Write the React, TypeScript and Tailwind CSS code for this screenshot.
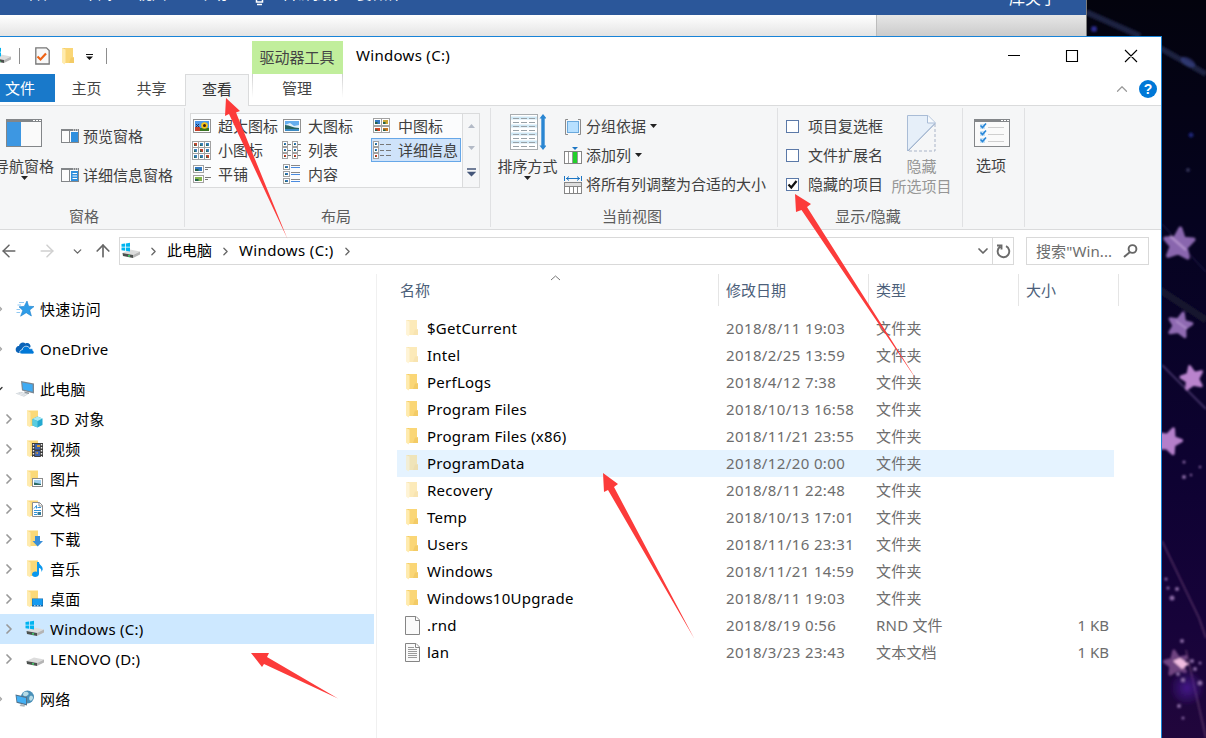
import React from 'react';
import { ArrowLeft, ArrowRight, ArrowUp, ChevronDown, ChevronRight, ChevronUp } from 'lucide-react';

type FileKind = 'folder' | 'hidden' | 'blank' | 'text';

interface FileRow {
    name: string;
    date: string;
    type: string;
    kind: FileKind;
    size?: string;
    hover?: boolean;
}

const FILES: FileRow[] = [
    { name: '$GetCurrent', date: '2018/8/11 19:03', type: '文件夹', kind: 'hidden' },
    { name: 'Intel', date: '2018/2/25 13:59', type: '文件夹', kind: 'hidden' },
    { name: 'PerfLogs', date: '2018/4/12 7:38', type: '文件夹', kind: 'folder' },
    { name: 'Program Files', date: '2018/10/13 16:58', type: '文件夹', kind: 'folder' },
    { name: 'Program Files (x86)', date: '2018/11/21 23:55', type: '文件夹', kind: 'folder' },
    { name: 'ProgramData', date: '2018/12/20 0:00', type: '文件夹', kind: 'hidden', hover: true },
    { name: 'Recovery', date: '2018/8/11 22:48', type: '文件夹', kind: 'hidden' },
    { name: 'Temp', date: '2018/10/13 17:01', type: '文件夹', kind: 'folder' },
    { name: 'Users', date: '2018/11/16 23:31', type: '文件夹', kind: 'folder' },
    { name: 'Windows', date: '2018/11/21 14:59', type: '文件夹', kind: 'folder' },
    { name: 'Windows10Upgrade', date: '2018/8/11 19:03', type: '文件夹', kind: 'folder' },
    { name: '.rnd', date: '2018/8/19 0:56', type: 'RND 文件', kind: 'blank', size: '1 KB' },
    { name: 'lan', date: '2018/3/23 23:43', type: '文本文档', kind: 'text', size: '1 KB' },
];

/* ---------- icons ---------- */

const FolderIcon = ({ faded = false }: { faded?: boolean }) => (
    <svg width="14" height="18" viewBox="0 0 14 18" className={faded ? 'opacity-50' : ''}>
        <path d="M1 1H12V10.500H13V16H4L1 15Z" fill="#f5cf6a" />
        <path d="M4 1H12V10.500H13V16H4Z" fill="#fad676" />
        <path d="M10 10.500H13V16H8Z" fill="#f3cb66" />
        <path d="M1 1L4.500 2.500V15.500L3.500 17.500L1 15.500Z" fill="#ffebae" />
    </svg>
);

const PageIcon = ({ lines = false }: { lines?: boolean }) => (
    <svg width="15" height="19" viewBox="0 0 15 19">
        <path d="M.5 .5H11L14.500 4V18.500H.5Z" fill="#fafafa" stroke="#858585" />
        <path d="M10.500 .5V4.500H14" fill="#fff" stroke="#858585" />
        {lines && <path d="M3 4.500H9M3 6.500H12M3 8.500H12M3 10.500H12M3 12.500H12M3 14.500H12" stroke="#9a9a9a" />}
    </svg>
);

const DriveIcon = ({ windows = false }: { windows?: boolean }) => (
    <svg width="20" height="18" viewBox="0 0 20 18">
        <path d="M1.500 11L9 7.500L19 9.500L12 13Z" fill="#dcdcdc" />
        <path d="M1.500 11L12 13V16L2 14Z" fill="#4c504e" />
        <path d="M12 13L19 9.500V12.500L12 16Z" fill="#b5b5b5" />
        <path d="M7 13.700L9 14.100" stroke="#3fd46a" strokeWidth="1.500" />
        {windows && <path d="M0.500 2L4 1.500V4.700H.5ZM4.800 1.400L9 .8V4.700H4.800ZM.5 5.500H4V8.700L.5 8.200ZM4.800 5.500H9V9.400L4.800 8.800Z" fill="#00b4f0" />}
    </svg>
);

const StarIcon = () => (
    <svg width="20" height="18" viewBox="0 0 20 18">
        <path d="M12 1L13.6 6.2L19 6.6L14.7 10L16.4 16L11.2 12.7L5.6 16.2L7.8 10.4L4 6.8L9.2 6.4Z" fill="#2f9de8" stroke="#1b7fcc" strokeWidth="0.6" />
        <path d="M4 2.5H9M2.5 5H6M1.5 9.5H5M1.5 12.5H5" stroke="#8fc8f2" strokeWidth="1" />
    </svg>
);

const CloudIcon = () => (
    <svg width="20" height="18" viewBox="0 0 20 18">
        <path d="M1 11C0 8 2 6 4 6C4.5 3 8 1.5 10.5 3.5C13 2 16 4 15.5 7L13 9L8 8L5 13C3 13 1.5 12.5 1 11Z" fill="#0a63b8" />
        <path d="M7 14C4 14 4 10 7.2 9.7C7.8 5.5 13.5 5 14.8 8.7C17.5 8.3 18.3 9.5 17.8 10.5C20 11.5 19 14 17.5 14Z" fill="#0078d7" stroke="#fff" strokeWidth="0.7" />
    </svg>
);

const ComputerIcon = () => (
    <svg width="20" height="18" viewBox="0 0 20 18">
        <path d="M6 1L19 3.5V13.5L7 10.5Z" fill="#7c8791" />
        <path d="M7.2 2.4L17.6 4.4V11.8L8 9.5Z" fill="#3fabf3" />
        <path d="M9 11.5L14 12.6V14L10 13.5Z" fill="#8e979e" />
        <path d="M.5 13.5L6 11.8L13 14.2L9 16.8Z" fill="#cdd3d8" />
        <path d="M2.5 13.6L9.5 15.6M5 12.8L11.5 14.8" stroke="#f5f7f8" strokeWidth=".7" />
    </svg>
);

const NetworkIcon = () => (
    <svg width="20" height="18" viewBox="0 0 20 18">
        <circle cx="12.5" cy="7" r="6.5" fill="#4a90b8" />
        <path d="M9 2C12 1 15 3 13 5S8 7 8 4ZM15 6C18 5 19 8 17 10S13 9 15 6Z" fill="#b7dbe6" />
        <path d="M.5 4.5L12 7V15.5L1.5 12.8Z" fill="#53718a" />
        <path d="M1.4 5.7L11 7.9V14L2.3 11.8Z" fill="#43b0f5" />
        <path d="M6 14L10 15.2L9.5 16.8L4.5 16Z" fill="#aab3b9" />
    </svg>
);

type Badge = '3d' | 'video' | 'picture' | 'document' | 'download' | 'music' | 'desktop';

const LibraryIcon = ({ badge }: { badge: Badge }) => (
    <svg width="18" height="18" viewBox="0 0 18 18">
        <path d="M1 .5H12V16H4L1 15Z" fill="#fbd978" />
        <path d="M1 .5L4.5 2.5V17.5L1 15.5Z" fill="#ffebae" />
        {badge === '3d' && (
            <>
                <path d="M6.5 9L11.5 6.5L16.5 8.5V15L11.5 17.5L6.5 15.5Z" fill="#24a9d0" />
                <path d="M6.5 9L11.5 6.5L16.5 8.5L11.5 11Z" fill="#a9eaf5" />
                <path d="M6.5 9L11.5 11V17.5L6.5 15.5Z" fill="#5accdf" />
            </>
        )}
        {badge === 'video' && (
            <>
                <rect x="6" y="3" width="11" height="14" fill="#3c3c3c" />
                <rect x="9" y="4" width="5" height="5.5" fill="#3d63ae" />
                <rect x="9" y="11" width="5" height="5" fill="#3d63ae" />
                <path d="M11 5H14V7H11ZM9 13L12 12V14Z" fill="#dc9d2c" />
                <path d="M7.5 4V17M15.5 4V17" stroke="#eee" strokeWidth="1.4" strokeDasharray="1.5 1.5" />
            </>
        )}
        {badge === 'picture' && (
            <>
                <rect x="6.5" y="8.5" width="10" height="8" fill="#fff" stroke="#8c8c8c" />
                <rect x="8" y="10" width="7" height="5" fill="#9fd0ef" />
                <path d="M8 15V12.5L15 14V15Z" fill="#2c6a64" />
            </>
        )}
        {badge === 'document' && (
            <>
                <path d="M6.5 2.5H13.5L16.5 5.5V16.5H6.5Z" fill="#fff" stroke="#8c8c8c" />
                <path d="M8 8.5L10.5 5.5V8.5M11.5 7.5H15M8 10.5H15M8 12.5H11M8 14.5H11" stroke="#3294d8" fill="none" />
                <path d="M13 2.500V6H16.500" stroke="#8c8c8c" fill="none" />
                <rect x="11.5" y="12" width="3.5" height="3" fill="#367e9b" />
            </>
        )}
        {badge === 'download' && <path d="M9 6H14V11H17L11.7 16.5L6.5 11H9Z" fill="#3a8fd8" />}
        {badge === 'music' && (
            <path d="M11 2H13C13 5 17 5.5 16.7 9.5L15.5 12C15.5 9 14.5 8 13 8V14C13 17.5 6 18 6 14.5C6 12 9 11 11 12Z" fill="#0a98ee" />
        )}
        {badge === 'desktop' && (
            <>
                <rect x="6" y="8.500" width="11" height="8" fill="#1668a8" />
                <rect x="6.500" y="9" width="10" height="6" fill="#159bf0" />
                <path d="M8 15.700H15" stroke="#fff" strokeWidth=".8" strokeDasharray="1.500 1.500" />
            </>
        )}
    </svg>
);

const PaneIcon = ({ lines = false }: { lines?: boolean }) => (
    <svg width="18" height="14" viewBox="0 0 18 14" className="shrink-0">
        <rect x="0.5" y="0.5" width="17" height="13" fill="#fcfcfc" stroke="#838689" />
        <rect width="18" height="2" fill="#838689" />
        <path d="M12 1H17" stroke="#fff" strokeDasharray="1 1" />
        <path d="M8.500 2V13" stroke="#838689" />
        <rect x="10" y="3" width="7" height="10" fill="#2f8fdd" />
        {lines && <path d="M11.500 5.500H16M11.500 8H16M11.500 10.500H16" stroke="#fff" />}
    </svg>
);

const NavPaneIcon = () => (
    <svg width="36" height="28" viewBox="0 0 36 28">
        <rect x="0.5" y="0.5" width="35" height="27" fill="#fafafa" stroke="#838689" />
        <rect width="36" height="3" fill="#838689" />
        <path d="M27 1.500H35" stroke="#fff" strokeDasharray="2 1" />
        <rect x="1" y="3" width="14" height="24" fill="#3d97e2" />
    </svg>
);

const Photo = ({ x, y, w = 4, h = 3, fill = '#3478c0' }: { x: number; y: number; w?: number; h?: number; fill?: string }) => (
    <>
        <rect x={x - 1.5} y={y - 1.5} width={w + 3} height={h + 3} fill="#fff" stroke="#a2a2a2" />
        <rect x={x} y={y} width={w} height={h} fill={fill} />
        <rect x={x} y={y + h / 2} width={w / 2} height={h / 2} fill="#24624b" />
    </>
);

const ViewIcon = ({ view }: { view: string }) => (
    <svg width="19" height="20" viewBox="0 0 19 20" className="shrink-0">
        {view === 'xl' && (
            <>
                <rect x="1.500" y="3.500" width="17" height="13" fill="#fff" stroke="#929292" />
                <rect x="3" y="5" width="14" height="10" fill="#4d98ea" />
                <path d="M3 11H8V15H3Z" fill="#c3402a" />
                <path d="M8 12H17V15H8Z" fill="#397523" />
                <circle cx="12.5" cy="9.500" r="3.300" fill="#f5c51a" />
                <circle cx="12.5" cy="9.500" r="1.500" fill="#3c1d10" />
                <path d="M4 8L7 11M7 8L4 11" stroke="#263054" />
            </>
        )}
        {view === 'lg' && (
            <>
                <rect x="1.500" y="3.500" width="17" height="13" fill="#fff" stroke="#929292" />
                <rect x="3" y="5" width="14" height="10" fill="#65aeee" />
                <path d="M3 9L8 7L12 10L17 9V12H3Z" fill="#e1f1fb" />
                <path d="M3 9C8 9 10 12 17 12V13H3Z" fill="#25635f" />
                <path d="M3 13H17V15H3Z" fill="#3c8bc4" />
            </>
        )}
        {view === 'md' && (
            <>
                <Photo x={3} y={4} w={5} h={4} />
                <Photo x={11} y={4} w={5} h={4} fill="#c8a437" />
                <Photo x={3} y={12} w={5} h={3} fill="#d64524" />
                <Photo x={11} y={12} w={5} h={3} fill="#c77720" />
            </>
        )}
        {view === 'sm' && [0, 1, 2].map(r => [0, 1, 2].map(c => (
            <Photo key={`${r}${c}`} x={2 + c * 6} y={3 + r * 6} w={3} h={3} fill={c === r ? '#c7452e' : '#3f83bd'} />
        )))}
        {view === 'list' && (
            <>
                {[0, 1, 2].map(r => <Photo key={r} x={2} y={3 + r * 6} w={2} h={2} fill={r === 2 ? '#d03a22' : '#3478c0'} />)}
                {[0, 1, 2].map(r => <Photo key={r} x={12} y={3 + r * 6} w={2} h={2} fill={r === 2 ? '#d03a22' : '#3478c0'} />)}
                <path d="M6 4.500H9M6 10.500H9M6 15.500H9M16 4.500H19M16 10.500H19M16 15.500H19" stroke="#777" />
            </>
        )}
        {view === 'details' && (
            <>
                {[0, 1, 2].map(r => <Photo key={r} x={3} y={3 + r * 6} w={2} h={2} fill={r === 2 ? '#d03a22' : '#3478c0'} />)}
                <path d="M8 4.500H12M14 4.500H19M8 10.500H12M14 10.500H19M8 15.500H12M14 15.500H19" stroke="#777" />
            </>
        )}
        {view === 'tiles' && (
            <>
                <Photo x={3} y={3} w={7} h={4} />
                <Photo x={3} y={13} w={7} h={4} fill="#83b34b" />
                <path d="M13 3.500H19M13 5.500H16M13 13.500H19M13 15.500H16" stroke="#777" />
            </>
        )}
        {view === 'content' && (
            <>
                {[0, 1, 2].map(r => <Photo key={r} x={3} y={2 + r * 7} w={3} h={2} />)}
                <path d="M9 3.500H18M9 10.500H18M9 17.500H18" stroke="#4a8be0" />
                <path d="M9 1.500H18M9 8.500H18M9 15.500H18" stroke="#888" />
            </>
        )}
    </svg>
);

const SortIcon = () => (
    <svg width="36" height="36" viewBox="0 0 36 36">
        <rect x="0.5" y="0.5" width="27" height="35" fill="#fff" stroke="#a9adb0" />
        <path d="M1 4H27M1 12H27M1 20H27M1 28H27" stroke="#cfe8f5" strokeWidth="3" />
        <path d="M3 4.500H26M3 8.500H26M3 12.500H26M3 16.500H26M3 20.500H26M3 24.500H26M3 28.500H26M3 32.500H26" stroke="#98a1a7" strokeDasharray="6 2" />
        <path d="M33 0L36.500 4.500H34.700V31.500H36.500L33 36L29.500 31.500H31.300V4.500H29.500Z" fill="#2a86d2" />
    </svg>
);

const GroupIcon = () => (
    <svg width="18" height="18" viewBox="0 0 18 18">
        <path d="M4 1.500H1.500V16.500H4M14 1.500H16.500V16.500H14" stroke="#8b8b8b" fill="none" />
        <rect x="3.500" y="3.500" width="11" height="11" fill="#b7e0ff" stroke="#6aa9dc" />
    </svg>
);

const AddColumnIcon = () => (
    <svg width="18" height="18" viewBox="0 0 18 18">
        <path d="M8 0H14L11 3Z" fill="#1c76c4" />
        <rect x=".5" y="4.500" width="17" height="12" fill="#fff" stroke="#858585" />
        <path d="M4.500 5V16M8.500 5V16M13.500 5V16" stroke="#9a9a9a" />
        <rect x="9" y="5" width="4" height="11" fill="#22cf2a" />
    </svg>
);

const FitColumnsIcon = () => (
    <svg width="18" height="18" viewBox="0 0 18 18">
        <path d="M.5 0V5M17.500 0V5M2 2.500H16M5 .5L2.500 2.500L5 4.500M13 .5L15.500 2.500L13 4.500" stroke="#1c76c4" fill="none" />
        <rect x=".5" y="6.500" width="17" height="11" fill="#fff" stroke="#858585" />
        <path d="M1 7H17V10H1Z" fill="#dedede" />
        <path d="M0 10.500H18M5.500 11V17M9.500 11V17M13.500 11V17" stroke="#858585" />
    </svg>
);

const HideIcon = () => (
    <svg width="29" height="37" viewBox="0 0 29 37">
        <path d="M.5 .5H21L28.500 8L.5 36Z" fill="#e6eff9" stroke="#a9bcd6" />
        <path d="M20.500 .5V8H28" fill="#f7fafd" stroke="#a9bcd6" />
        <path d="M28 9V36H1" fill="none" stroke="#a9b4c8" strokeDasharray="3 2" />
        <path d="M1 36L28 8.500" stroke="#9fb2cd" />
    </svg>
);

const OptionsIcon = () => (
    <svg width="36" height="28" viewBox="0 0 36 28">
        <rect x="0.5" y="0.5" width="35" height="27" fill="#fafafa" stroke="#838689" />
        <rect width="36" height="3" fill="#838689" />
        <path d="M27 1.500H35" stroke="#fff" strokeDasharray="2 1" />
        <path d="M6 5H11V10H6ZM6 12H11V17H6ZM6 19H11V24H6Z" fill="#c7e1f5" />
        <path d="M6.500 6.500L8.500 8.500L12 4.500M6.500 13.500L8.500 15.500L12 11.500M6.500 20.500L8.500 22.500L12 18.500" stroke="#2786d8" strokeWidth="1.600" fill="none" />
        <path d="M14 8.500H30M14 15.500H30M14 22.500H30" stroke="#cfcfcf" />
    </svg>
);

const Caret = ({ className = '' }: { className?: string }) => (
    <svg width="7" height="4" viewBox="0 0 7 4" className={className}>
        <path d="M0 0H7L3.500 4Z" fill="currentColor" />
    </svg>
);

/* ---------- background ---------- */

const WallpaperStar = ({ x, y, s, r, fill }: { x: number; y: number; s: number; r: number; fill: string }) => (
    <path
        transform={`translate(${x} ${y}) rotate(${r}) scale(${s})`}
        d="M0 -11L3 -4L10 -4L5 2L7 9L0 6L-7 9L-5 2L-10 -3L-3 -4Z"
        fill={fill}
        stroke={fill}
        strokeWidth="3"
        strokeLinejoin="round"
    />
);

const Wallpaper = () => (
    <svg className="absolute inset-0" width="1206" height="738" viewBox="0 0 1206 738">
        <defs>
            <linearGradient id="sky" x1="0" y1="0" x2="0" y2="1">
                <stop offset="0" stopColor="#03030d" />
                <stop offset="0.3" stopColor="#05031f" />
                <stop offset="0.65" stopColor="#0e0232" />
                <stop offset="0.85" stopColor="#17033a" />
                <stop offset="1" stopColor="#21063c" />
            </linearGradient>
            <radialGradient id="glow">
                <stop offset="0" stopColor="#5320a8" />
                <stop offset="1" stopColor="#5320a8" stopOpacity="0" />
            </radialGradient>
            <filter id="soft" x="-20%" y="-20%" width="140%" height="140%">
                <feGaussianBlur stdDeviation="0.900" />
            </filter>
        </defs>
        <rect width="1206" height="738" fill="url(#sky)" />
        <g filter="url(#soft)">
            <path d="M1086 12L1140 36M1160 48L1206 74" stroke="#1f2340" strokeWidth="6" />
            <path d="M1160 290L1206 320" stroke="#15152f" strokeWidth="7" />
            <path d="M1162 224L1206 272" stroke="#2a2354" strokeWidth="1" />
            <path d="M1162 365L1206 409" stroke="#554078" strokeWidth="1.500" />
            <path d="M1162 541L1199 618L1206 638M1186 650L1206 738" stroke="#553164" strokeWidth="1.500" fill="none" />
            <circle cx="1094" cy="29" r="3" fill="#2a2a88" />
            <ellipse cx="1188" cy="62" rx="8" ry="4" transform="rotate(28 1188 62)" fill="#3b4590" opacity=".6" />
            <circle cx="1191" cy="135" r="2.500" fill="#1c2473" />
            <circle cx="1188" cy="170" r="2" fill="#353556" />
            <WallpaperStar x={1179} y={244} s={1.4} r={5} fill="#8966ae" />
            <path d="M1170 236L1186 250" stroke="#b795d0" strokeWidth="2" />
            <WallpaperStar x={1180} y={325} s={1.1} r={15} fill="#8f6bb2" />
            <path d="M1176 321L1187 329" stroke="#b795d0" strokeWidth="1.500" />
            <WallpaperStar x={1192} y={378} s={1.05} r={-12} fill="#b983cd" />
            <WallpaperStar x={1169} y={441} s={1.15} r={20} fill="#b47fca" />
            <WallpaperStar x={1176} y={663} s={1.1} r={-10} fill="#704481" />
            <circle cx="1187" cy="688" r="18" fill="url(#glow)" opacity=".7" />
            <path d="M1173 661L1180 658L1189 664L1182 669Z" fill="#f0bce0" />
            <g fill="#8b6aa5">
                <circle cx="1184" cy="462" r="1.500" />
                <circle cx="1184" cy="477" r="2" />
                <circle cx="1200" cy="467" r="1.200" />
                <circle cx="1191" cy="475" r="1.200" />
                <circle cx="1166" cy="579" r="1.500" />
                <circle cx="1168" cy="588" r="1.500" />
                <circle cx="1177" cy="589" r="2" />
                <circle cx="1172" cy="598" r="2.500" />
                <circle cx="1182" cy="641" r="2" />
                <circle cx="1192" cy="661" r="2" />
                <circle cx="1195" cy="669" r="2" />
                <circle cx="1200" cy="663" r="1.500" />
                <circle cx="1178" cy="674" r="2" />
                <circle cx="1183" cy="680" r="2.200" />
                <circle cx="1200" cy="683" r="2.500" />
                <circle cx="1179" cy="706" r="2" />
                <circle cx="1183" cy="718" r="1.500" />
            </g>
        </g>
    </svg>
);

const WordWindow = () => (
    <div className="absolute left-0 top-0 flex h-9 w-[1087px] flex-col border-r border-[#7a7a7a]">
        <div className="flex h-[15px] items-start bg-[#2b579a] pl-[21px] text-[15px] text-white">
            <div className="flex -mt-[17px] h-5 w-full items-center leading-5 tracking-[-0.5px]">
                <span className="w-[62px]">邮件</span>
                <span className="w-[54px]">审阅</span>
                <span className="w-[61px]">视图</span>
                <span className="w-[57px]">帮助</span>
                <svg width="9" height="20" viewBox="0 0 9 20" className="mr-[18px] translate-y-[3px]">
                    <path d="M1.500 10V16H7.500V10M2 18.500H7" stroke="#fff" strokeWidth="1.500" fill="none" />
                </svg>
                <span className="w-[727px] tracking-normal">告诉我你想要做什么</span>
                <span className="translate-y-[5px] text-base tracking-normal">库关于</span>
            </div>
        </div>
        <div className="flex flex-1">
            <div className="w-[876px] bg-linear-to-b from-white to-[#e4e4e4]" />
            <div className="flex-1 border-l border-[#bcbcbc] bg-linear-to-b from-[#e6e6e6] to-[#cbcbcb]" />
        </div>
    </div>
);

/* ---------- explorer ---------- */

const TitleBar = () => (
    <div className="flex h-[69px] shrink-0 border-b border-[#dadbdc]">
        <div className="flex w-[252px] flex-col">
            <div className="flex h-[37px] items-center">
                <div className="-ml-2 w-5"><DriveIcon windows /></div>
                <div className="ml-[7px] h-4 w-px bg-[#8d8d8d]" />
                <svg width="15" height="18" viewBox="0 0 15 18" className="ml-[15px]">
                    <path d="M.8 .8H11.500L14.200 3.500V17H.8Z" fill="#f8f8f8" stroke="#777" strokeWidth="1.300" />
                    <path d="M2.500 9.500L5.500 12.500L11 6.500" stroke="#ee6214" strokeWidth="2.200" fill="none" />
                </svg>
                <div className="ml-[11px]"><FolderIcon /></div>
                <svg width="7" height="6" viewBox="0 0 7 6" className="ml-[11px] mt-[2px]">
                    <path d="M0 .5H7" stroke="#111" />
                    <path d="M0 2.500H7L3.500 6Z" fill="#111" />
                </svg>
                <div className="ml-[13px] h-4 w-px bg-[#8d8d8d]" />
            </div>
            <div className="flex flex-1 text-[15px] text-[#444]">
                <div className="flex h-7 w-[55px] items-center bg-[#1979ca] pl-[5px] text-white">文件</div>
                <div className="flex h-[29px] w-[63px] items-center justify-center">主页</div>
                <div className="flex h-[29px] w-[67px] items-center justify-center">共享</div>
                <div className="relative z-10 -mb-px flex w-16 items-center justify-center border border-b-0 border-[#dadbdc] bg-[#f5f6f7] pb-[3px] text-[#333]">查看</div>
            </div>
        </div>
        <div className="flex w-[91px] flex-col pt-1 text-[15px] text-[#444]">
            <div className="flex h-[33px] items-center justify-center whitespace-nowrap bg-[#c1ee9c] pr-px">驱动器工具</div>
            <div className="flex h-6 justify-between">
                <div className="w-px bg-linear-to-b from-[#cfcfcf] to-white" />
                <span className="pr-px pt-[3px]">管理</span>
                <div className="w-px bg-linear-to-b from-[#cfcfcf] to-white" />
            </div>
        </div>
        <div className="flex-1 pl-[13px] pt-[6px] text-[15px] leading-6 tracking-[0.3px] text-black">Windows (C:)</div>
        <div className="flex w-[174px] flex-col">
            <div className="flex h-[37px] items-center text-black">
                <svg width="130" height="14" viewBox="0 0 130 14" className="ml-[21px]">
                    <path d="M0 6.500H12M58.500 1.500H69.500V12.500H58.500ZM117 1L129 13M129 1L117 13" stroke="#000" fill="none" strokeWidth="1.100" />
                </svg>
            </div>
            <div className="flex items-center justify-end pr-1 pt-[6px]">
                <ChevronUp className="mr-[8px] size-[18px] text-[#9b9b9b]" strokeWidth={1.6} />
                <span className="flex size-[18px] items-center justify-center rounded-full bg-[#0078d7] font-['Liberation_Sans'] text-[14px] font-bold leading-none text-white">?</span>
            </div>
        </div>
    </div>
);

const Group = ({ label, className, children }: { label: string; className: string; children: React.ReactNode }) => (
    <div className={`my-0.5 flex shrink-0 flex-col whitespace-nowrap border-r border-[#e0e1e3] ${className}`}>
        <div className="flex h-[98px]">{children}</div>
        <div className="text-center leading-5 text-[#5c5c5c]">{label}</div>
    </div>
);

const GALLERY = [
    [['xl', '超大图标'], ['lg', '大图标'], ['md', '中图标']],
    [['sm', '小图标'], ['list', '列表'], ['details', '详细信息']],
    [['tiles', '平铺'], ['content', '内容']],
];

const CheckRow = ({ label, checked = false }: { label: string; checked?: boolean }) => (
    <div className="flex h-[29px] items-center">
        <div className="flex size-[13px] shrink-0 items-center justify-center border border-[#5b79a8] bg-white">
            {checked && (
                <svg width="11" height="11" viewBox="0 0 11 11">
                    <path d="M1.500 5.500L4.300 8.500L9.500 2" stroke="#111" strokeWidth="2.200" fill="none" />
                </svg>
            )}
        </div>
        <span className="-mt-0.5 ml-[9px]">{label}</span>
    </div>
);

const CommandRow = ({ icon, label, menu = false }: { icon: React.ReactNode; label: string; menu?: boolean }) => (
    <div className="flex h-[29px] items-center gap-1">
        {icon}
        <span className="-mt-0.5">{label}</span>
        {menu && <Caret className="-mt-0.5 text-[#222]" />}
    </div>
);

const Ribbon = () => (
    <div className="flex h-[124px] shrink-0 border-b border-[#dadbdc] bg-[#f5f6f7] text-[15px] leading-5 text-[#3f3f3f]">
        <Group label="窗格" className="w-[185px] pr-4">
            <div className="-ml-[6px] flex w-[60px] shrink-0 flex-col items-center pt-[11px]">
                <NavPaneIcon />
                <span className="mt-[9px]">导航窗格</span>
                <Caret className="text-[#222]" />
            </div>
            <div className="flex flex-col pl-[7px] pt-[8px]">
                <div className="flex h-[39px] items-center gap-1"><PaneIcon />预览窗格</div>
                <div className="flex h-[39px] items-center gap-1"><PaneIcon lines />详细信息窗格</div>
            </div>
        </Group>
        <Group label="布局" className="w-[306px] pl-[5px] pr-2">
            <div className="mt-[5px] flex h-[75px] w-[272px] flex-col border border-r-0 border-[#dadbdc] bg-[#fbfcfd]">
                {GALLERY.map((row, i) => (
                    <div key={i} className="flex h-[24px]">
                        {row.map(([view, label]) => (
                            <div
                                key={view}
                                className={`flex h-[24px] w-[90px] items-center gap-[7px] ${view === 'details' ? 'border border-[#66a7e8] bg-[#cfe3fa]' : 'border border-transparent'}`}
                            >
                                <ViewIcon view={view} />
                                <span>{label}</span>
                            </div>
                        ))}
                    </div>
                ))}
            </div>
            <div className="mt-[5px] flex h-[75px] w-[18px] flex-col items-center justify-between border border-[#dadbdc] py-[10px] text-[#b3bac6]">
                <Caret className="rotate-180" />
                <Caret />
                <svg width="9" height="9" viewBox="0 0 9 9">
                    <path d="M0 1H9M1.500 4.500H7.500L4.500 7.500Z" fill="#45577a" stroke="#45577a" strokeWidth="1.500" />
                </svg>
            </div>
        </Group>
        <Group label="当前视图" className="w-[287px] pr-[4px]">
            <div className="flex w-[73px] shrink-0 flex-col items-center pt-[6px]">
                <SortIcon />
                <span className="mt-[6px]">排序方式</span>
                <Caret className="text-[#222]" />
            </div>
            <div className="flex flex-col pt-[4px]">
                <CommandRow icon={<GroupIcon />} label="分组依据" menu />
                <CommandRow icon={<AddColumnIcon />} label="添加列" menu />
                <CommandRow icon={<FitColumnsIcon />} label="将所有列调整为合适的大小" />
            </div>
        </Group>
        <Group label="显示/隐藏" className="w-[185px] pr-[4px]">
            <div className="flex w-[105px] shrink-0 flex-col pl-2 pt-[4px]">
                <CheckRow label="项目复选框" />
                <CheckRow label="文件扩展名" />
                <CheckRow label="隐藏的项目" checked />
            </div>
            <div className="flex flex-1 flex-col items-center pl-[2px] pt-[7px] text-center text-[#969696]">
                <HideIcon />
                <span className="mt-[4px]">隐藏</span>
                <span>所选项目</span>
            </div>
        </Group>
        <Group label="" className="w-[62px]">
            <div className="flex w-[58px] flex-col items-center pt-[11px]">
                <OptionsIcon />
                <span className="mt-[8px] pr-0.5">选项</span>
            </div>
        </Group>
    </div>
);

const AddressBar = () => (
    <div className="flex h-[42px] shrink-0 items-center text-[15px]">
        <ArrowLeft className="size-5 -ml-px text-[#666]" strokeWidth={1.8} />
        <ArrowRight className="ml-[18px] size-5 text-[#d0d0d0]" strokeWidth={1.8} />
        <ChevronDown className="ml-[14px] size-[13px] text-[#666]" strokeWidth={2.4} />
        <ArrowUp className="ml-[9px] size-5 text-[#666]" strokeWidth={2} />
        <div className="ml-[6px] flex h-7 w-[895px] items-center border border-[#d9d9d9] text-black">
            <div className="ml-px"><DriveIcon windows /></div>
            <ChevronRight className="ml-[6px] size-[13px] text-[#666]" strokeWidth={2.4} />
            <span className="-mt-0.5 ml-[7px]">此电脑</span>
            <ChevronRight className="ml-[7px] size-[13px] text-[#666]" strokeWidth={2.4} />
            <span className="-mt-0.5 ml-[7px] w-[97px] whitespace-nowrap tracking-[0.35px]">Windows (C:)</span>
            <ChevronRight className="ml-[5px] size-[13px] text-[#666]" strokeWidth={2.4} />
            <ChevronDown className="ml-auto mr-px size-4 text-[#666]" strokeWidth={2.6} />
            <div className="flex h-full w-[21px] items-center justify-center border-l border-[#d9d9d9]">
                <svg width="15" height="16" viewBox="0 0 15 16">
                    <path d="M10 3.200A5.800 5.800 0 1 1 4.200 3.600M1 2.500H5.500V6.500" stroke="#6b6b6b" strokeWidth="1.900" fill="none" />
                </svg>
            </div>
        </div>
        <div className="ml-3 flex h-7 w-[123px] items-center justify-between whitespace-nowrap border border-[#d9d9d9] pl-[9px] pr-[10px] text-[#6d6d6d]">
            <span className="tracking-[0.1px]">搜索"Win...</span>
            <svg width="15" height="14" viewBox="0 0 15 14">
                <circle cx="9.500" cy="5" r="3.900" stroke="#666" strokeWidth="1.900" fill="none" />
                <path d="M7 8L1 13" stroke="#666" strokeWidth="2" />
            </svg>
        </div>
    </div>
);

interface NavItemProps {
    icon: React.ReactNode;
    label: string;
    child?: boolean;
    open?: boolean;
    selected?: boolean;
}

const NavItem = ({ icon, label, child, open, selected }: NavItemProps) => (
    <div className={`flex h-[30px] w-[374px] shrink-0 items-center ${selected ? 'bg-[#cde8ff]' : ''}`}>
        {child ? (
            <ChevronRight className="ml-[1px] size-4 shrink-0 text-[#999]" strokeWidth={2.6} />
        ) : open ? (
            <ChevronDown className="-ml-[7px] size-3 shrink-0 text-[#333]" strokeWidth={2.6} />
        ) : (
            <ChevronRight className="-ml-[6px] mr-[-1px] size-3 shrink-0 text-[#a6a6a6]" strokeWidth={2.6} />
        )}
        <div className={`flex w-5 shrink-0 justify-center ${child ? 'ml-[8px]' : 'ml-[10px]'}`}>{icon}</div>
        <span className={`tracking-[0.25px] ${child ? 'ml-[5px]' : 'ml-[5px]'}`}>{label}</span>
    </div>
);

const LIBRARIES: [Badge, string][] = [
    ['3d', '3D 对象'],
    ['video', '视频'],
    ['picture', '图片'],
    ['document', '文档'],
    ['download', '下载'],
    ['music', '音乐'],
    ['desktop', '桌面'],
];

const Sidebar = () => (
    <div className="flex w-[377px] shrink-0 flex-col border-r border-[#f0f0f0] pt-5 text-[15px] text-black">
        <NavItem icon={<StarIcon />} label="快速访问" />
        <div className="h-[10px] shrink-0" />
        <NavItem icon={<CloudIcon />} label="OneDrive" />
        <div className="h-[10px] shrink-0" />
        <NavItem icon={<ComputerIcon />} label="此电脑" open />
        {LIBRARIES.map(([badge, label]) => (
            <NavItem key={badge} icon={<LibraryIcon badge={badge} />} label={label} child />
        ))}
        <NavItem icon={<DriveIcon windows />} label="Windows (C:)" child selected />
        <NavItem icon={<DriveIcon />} label="LENOVO (D:)" child />
        <div className="h-[10px] shrink-0" />
        <NavItem icon={<NetworkIcon />} label="网络" />
    </div>
);

const FileList = () => (
    <div className="flex flex-1 flex-col pl-5 text-[15px]">
        <div className="flex h-8 text-[#4c607a]">
            <div className="flex w-[322px] items-center border-r border-[#e5e5e5] pl-[3px]">
                <span>名称</span>
                <svg width="11" height="6" viewBox="0 0 11 6" className="-mt-[25px] ml-[120px]">
                    <path d="M1 5L5.500 1L10 5" stroke="#777" fill="none" />
                </svg>
            </div>
            <div className="flex w-[150px] items-center border-r border-[#e5e5e5] pl-[7px]">修改日期</div>
            <div className="flex w-[150px] items-center border-r border-[#e5e5e5] pl-[7px]">类型</div>
            <div className="flex w-[100px] items-center border-r border-[#e5e5e5] pl-[7px]">大小</div>
        </div>
        <div className="mt-[9px] flex flex-col">
            {FILES.map(f => (
                <div key={f.name} className={`flex h-[27px] w-[717px] items-center ${f.hover ? 'bg-[#e5f3ff]' : ''}`}>
                    <div className="w-[30px] pb-px pl-[8px]">
                        {f.kind === 'folder' || f.kind === 'hidden' ? <FolderIcon faded={f.kind === 'hidden'} /> : <PageIcon lines={f.kind === 'text'} />}
                    </div>
                    <span className="w-[299px] tracking-[0.25px] text-black">{f.name}</span>
                    <span className="w-[150px] whitespace-nowrap tracking-[0.38px] text-[#6d6d6d]">{f.date}</span>
                    <span className="w-[143px] tracking-[0.2px] text-[#6d6d6d]">{f.type}</span>
                    <span className="w-[90px] text-right text-[#6d6d6d]">{f.size}</span>
                </div>
            ))}
        </div>
    </div>
);

const ExplorerWindow = () => (
    <div className="absolute left-0 top-9 flex h-[702px] w-[1162px] flex-col border-r border-t border-[#1883d7] bg-white">
        <TitleBar />
        <Ribbon />
        <AddressBar />
        <div className="flex min-h-0 flex-1 pt-[2px]">
            <Sidebar />
            <FileList />
        </div>
    </div>
);

const Annotations = () => (
    <svg className="pointer-events-none absolute inset-0 z-20" width="1206" height="738" viewBox="0 0 1206 738">
        <g fill="#fc3b3a">
            <path d="M226 98L240 111L236 112.500L287.500 239L229 114L225 116Z" />
            <path d="M795 194L811 204L807 207L918 382L801.500 210L796 212Z" />
            <path d="M603 473L618 484L614 487L694.500 639L608 490L604 492Z" />
            <path d="M251 653L269 653L267 657L338 698.500L264 664L262 667Z" />
        </g>
    </svg>
);

const App: React.FC = () => (
    <div className="relative h-[738px] w-[1206px] overflow-hidden bg-[#03030d] font-['Noto_Sans','Noto_Sans_CJK_SC',sans-serif]">
        <Wallpaper />
        <WordWindow />
        <ExplorerWindow />
        <Annotations />
    </div>
);

export default App;
